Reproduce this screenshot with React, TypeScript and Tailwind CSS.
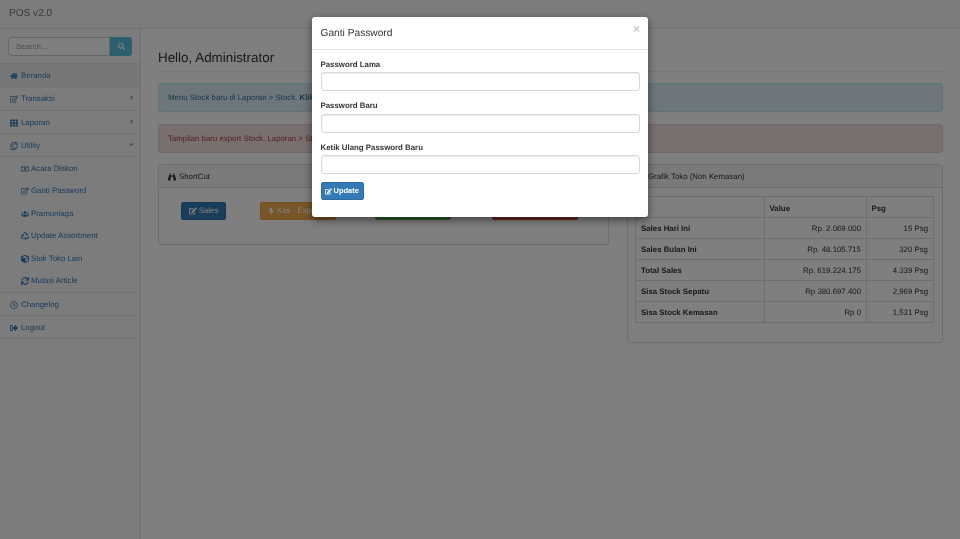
import React from "react";
import {
  FaHome, FaRegEdit, FaEdit, FaTh, FaRegCopy, FaRegMoneyBillAlt, FaUsers, FaRecycle, FaCube, FaSync,
  FaRegClock, FaSignOutAlt, FaSearch, FaAngleLeft, FaAngleDown, FaBinoculars, FaBolt, FaChartBar,
} from "react-icons/fa";
import type { IconType } from "react-icons";

type Item = { icon: IconType; label: string; active?: boolean; caret?: string; short?: boolean };

const top: Item[] = [
  { icon: FaHome, label: "Beranda", active: true },
  { icon: FaRegEdit, label: "Transaksi", caret: "left" },
  { icon: FaTh, label: "Laporan", caret: "left" },
  { icon: FaRegCopy, label: "Utility", caret: "down" },
];
const subs = [
  { icon: FaRegMoneyBillAlt, label: "Acara Diskon" },
  { icon: FaRegEdit, label: "Ganti Password" },
  { icon: FaUsers, label: "Pramuniaga" },
  { icon: FaRecycle, label: "Update Assortment" },
  { icon: FaCube, label: "Stok Toko Lain" },
  { icon: FaSync, label: "Mutasi Article" },
];
const rows = [
  ["Sales Hari Ini", "Rp. 2.069.000", "15 Psg"],
  ["Sales Bulan Ini", "Rp. 48.105.715", "320 Psg"],
  ["Total Sales", "Rp. 619.224.175", "4.339 Psg"],
  ["Sisa Stock Sepatu", "Rp 380.697.400", "2,969 Psg"],
  ["Sisa Stock Kemasan", "Rp 0", "1,531 Psg"],
];

function MenuRow({ item }: { item: Item }) {
  const Icon = item.icon;
  return (
    <div className={`${item.short ? "h-[23px]" : "h-[23.3px]"} flex items-center pt-[1px] pl-[10px] pr-[5px] border-b border-[#e7e7e7] text-[#337ab7] ${item.active ? "bg-[#eeeeee]" : ""}`}>
      <Icon className="w-[8px] h-[8px] mr-[3px]" />
      <span>{item.label}</span>
      {item.caret === "left" && <FaAngleLeft className="ml-auto w-[7px] h-[7px] mb-[3px] opacity-70" />}
      {item.caret === "down" && <FaAngleDown className="ml-auto w-[7px] h-[7px] mb-[3px] opacity-70" />}
    </div>
  );
}

function Field({ label }: { label: string }) {
  return (
    <div className="mb-[8px]">
      <label className="block font-bold text-[#333333] h-[14.5px] leading-[13px]">{label}</label>
      <input className="block w-full h-[19px] bg-white border border-[#d8d8d8] rounded-[3px] shadow-[inset_0_1px_1px_rgba(0,0,0,0.075)]" />
    </div>
  );
}

export default function App() {
  return (
    <div className="relative h-[539px] w-[960px] overflow-hidden bg-white text-[7.85px] text-[#333333] font-['Liberation_Sans',Arial,sans-serif] [text-rendering:geometricPrecision] blur-[0.3px]">
      <header className="h-[29px] bg-[#f8f8f8] border-b border-[#e7e7e7] flex items-center pl-[9px] pb-[1px]">
        <span className="text-[10.1px] text-[#777777]">POS v2.0</span>
      </header>
      <div className="flex h-[510px]">
        <aside className="w-[141px] shrink-0 bg-[#f8f8f8] border-r border-[#e7e7e7]">
          <div className="h-[35.3px] pt-[8px] pl-[8px] pr-[8px] border-b border-[#e7e7e7] flex">
            <input placeholder="Search..." className="w-[102px] h-[19px] bg-white border border-[#cccccc] rounded-l-[3px] px-[7px] text-[7.85px] placeholder:text-[#999999]" />
            <button className="w-[22px] h-[19px] bg-[#5bc0de] rounded-r-[3px] flex items-center justify-center text-white">
              <FaSearch className="w-[7px] h-[7px]" />
            </button>
          </div>
          {top.map((t) => <MenuRow key={t.label} item={t} />)}
          <div className="border-b border-[#e7e7e7]">
            {subs.map((s) => {
              const Icon = s.icon;
              return (
                <div key={s.label} className="h-[22.5px] flex items-center pl-[21px] text-[#337ab7]">
                  <Icon className="w-[8px] h-[8px] mr-[2px]" />
                  <span>{s.label}</span>
                </div>
              );
            })}
          </div>
          <MenuRow item={{ icon: FaRegClock, label: "Changelog", short: true }} />
          <MenuRow item={{ icon: FaSignOutAlt, label: "Logout", short: true }} />
        </aside>
        <main className="flex-1 px-[17px]">
          <div className="mt-[21px] h-[22px] border-b border-[#eeeeee]">
            <h1 className="text-[13.4px] leading-[16px] font-normal text-[#333333]">Hello, Administrator</h1>
          </div>
          <div className="mt-[11px] h-[29px] flex items-center pl-[9px] bg-[#d9edf7] border border-[#bce8f1] rounded-[3px] text-[#31708f]">
            <span>Menu Stock baru di Laporan &gt; Stock. <b>Klik disini</b></span>
          </div>
          <div className="mt-[12px] h-[29px] flex items-center pl-[9px] bg-[#f2dede] border border-[#ebccd1] rounded-[3px] text-[#a94442]">
            <span>Tampilan baru export Stock. Laporan &gt; Stock</span>
          </div>
          <div className="mt-[11px] flex gap-[18px] items-start">
            <section className="w-[451px] h-[81px] bg-white border border-[#dddddd] rounded-[3px]">
              <div className="h-[23px] bg-[#f5f5f5] border-b border-[#dddddd] flex items-center pl-[9px] gap-[3px] pt-[1px]">
                <FaBinoculars className="w-[8px] h-[8px]" />
                <span>ShortCut</span>
              </div>
              <div className="relative h-[56px]">
                <div className="absolute left-[22px] top-[14px] w-[45px] h-[18px] rounded-[2px] bg-[#337ab7] border border-[#2e6da4] text-white flex items-center justify-center gap-[2px]">
                  <FaEdit className="w-[8px] h-[8px]" /> Sales
                </div>
                <div className="absolute left-[101px] top-[14px] w-[76px] h-[18px] rounded-[2px] bg-[#f0ad4e] border border-[#eea236] text-white flex items-center justify-center gap-[2px]">
                  <FaBolt className="w-[7px] h-[7px]" /> Kas - Expense
                </div>
                <div className="absolute left-[216px] top-[14px] w-[76px] h-[18px] rounded-[2px] bg-[#5cb85c] border border-[#4cae4c] text-white flex items-center justify-center">Kas - Income</div>
                <div className="absolute left-[333px] top-[14px] w-[86px] h-[18px] rounded-[2px] bg-[#d9534f] border border-[#d43f3a] text-white flex items-center justify-center">Kas - Setoran</div>
              </div>
            </section>
            <section className="w-[316px] h-[179px] bg-white border border-[#dddddd] rounded-[3px]">
              <div className="h-[23px] bg-[#f5f5f5] border-b border-[#dddddd] flex items-center pl-[9px] gap-[3px] pt-[1px]">
                <FaChartBar className="w-[8px] h-[8px]" />
                <span>Grafik Toko (Non Kemasan)</span>
              </div>
              <div className="pl-[7px] pt-[8px]">
                <table className="w-[299px] border-collapse">
                  <tbody>
                    <tr className="h-[21px]">
                      <th className="w-[129px] border border-[#dddddd]"></th>
                      <th className="w-[102px] border border-[#dddddd] text-left pl-[4.5px] pt-[4px] font-bold">Value</th>
                      <th className="border border-[#dddddd] text-left pl-[4.5px] pt-[4px] font-bold">Psg</th>
                    </tr>
                    {rows.map((r) => (
                      <tr key={r[0]} className="h-[21px]">
                        <td className="border border-[#dddddd] pl-[5px] pt-[2px] font-bold">{r[0]}</td>
                        <td className="border border-[#dddddd] pr-[5px] pt-[2px] text-right">{r[1]}</td>
                        <td className="border border-[#dddddd] pr-[5px] pt-[2px] text-right">{r[2]}</td>
                      </tr>
                    ))}
                  </tbody>
                </table>
              </div>
            </section>
          </div>
        </main>
      </div>

      <div className="absolute inset-0 bg-black/50" />
      <div className="absolute left-[312px] top-[17px] w-[336px] h-[200px] bg-white rounded-[3px] shadow-[0_3px_9px_rgba(0,0,0,0.5)]">
        <div className="relative h-[33px] border-b border-[#e5e5e5] flex items-center pl-[8.5px] pt-[2px]">
          <span className="text-[10.2px] text-[#333333]">Ganti Password</span>
          <span className="absolute right-[8px] top-[5px] text-[12px] leading-[14px] font-bold text-[#cccccc]">×</span>
        </div>
        <div className="px-[8.5px] pt-[7.5px]">
          <Field label="Password Lama" />
          <Field label="Password Baru" />
          <Field label="Ketik Ulang Password Baru" />
          <button className="w-[43px] h-[18px] rounded-[2px] bg-[#337ab7] border border-[#2e6da4] text-white flex items-center justify-center gap-[1.5px] text-[7.5px] font-bold">
            <FaEdit className="w-[7px] h-[7px]" /> Update
          </button>
        </div>
      </div>
    </div>
  );
}
